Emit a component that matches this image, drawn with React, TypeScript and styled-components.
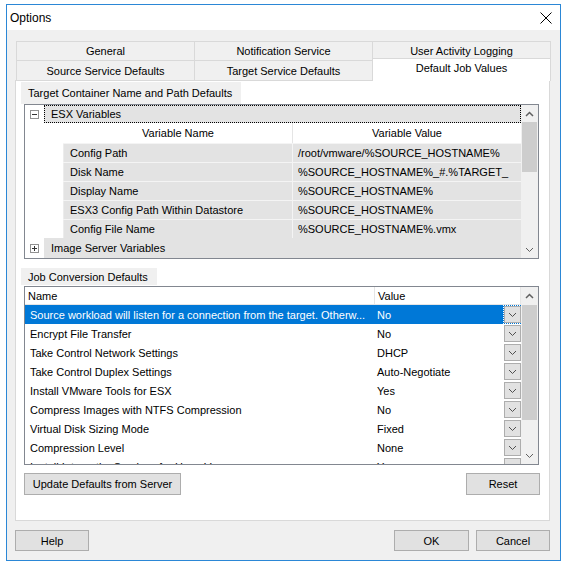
import React from 'react';
import styled, { createGlobalStyle, css } from 'styled-components';

const GlobalStyle = createGlobalStyle`
  html, body {
    margin: 0;
    padding: 0;
    background: #ffffff;
  }
  body {
    font-family: "Liberation Sans", Arial, sans-serif;
    font-size: 11px;
    color: #000000;
  }
`;

const Screen = styled.div`
  padding: 4px 0 0 6px;
`;

const Window = styled.div`
  width: 555px;
  height: 557px;
  box-sizing: border-box;
  border: 1px solid #2b87d6;
  background: #f0f0f0;
  display: flex;
  flex-direction: column;
`;

const TitleBar = styled.div`
  height: 25px;
  background: #ffffff;
  display: flex;
  align-items: center;
  justify-content: space-between;
  padding: 0 8px 0 3px;
  font-size: 12px;
`;

const Body = styled.div`
  flex: 1;
  padding: 11px 11px 0 8px;
  display: flex;
  flex-direction: column;
`;

const TabControl = styled.div`
  width: 535px;
  display: flex;
  flex-direction: column;
`;

const TabRow = styled.div<{ $h: number }>`
  display: flex;
  height: ${({ $h }) => $h}px;
  padding-left: 1px;
`;

const Tab = styled.div<{ $active?: boolean }>`
  width: 179px;
  box-sizing: border-box;
  margin-right: -1px;
  border: 1px solid #d9d9d9;
  border-bottom: none;
  display: flex;
  align-items: center;
  justify-content: center;
  background: #f0f0f0;
  ${({ $active }) =>
    $active &&
    css`
      position: relative;
      z-index: 1;
      background: #ffffff;
      height: 23px;
      margin-top: -2px;
      padding-bottom: 4px;
    `}
`;

const TabPage = styled.div`
  height: 441px;
  box-sizing: border-box;
  border: 1px solid #d9d9d9;
  background: #ffffff;
  padding: 1px 9px 0 5px;
  display: flex;
  flex-direction: column;
`;

const GroupLabel = styled.div<{ $h: number; $gapTop?: number; $gapBottom?: number }>`
  align-self: flex-start;
  height: ${({ $h }) => $h}px;
  margin-top: ${({ $gapTop }) => $gapTop ?? 0}px;
  margin-bottom: ${({ $gapBottom }) => $gapBottom ?? 0}px;
  display: flex;
  align-items: center;
  padding: 0 9px 0 7px;
  background: #f0f0f0;
`;

const Framed = styled.div<{ $h: number }>`
  margin-left: 3px;
  width: 515px;
  height: ${({ $h }) => $h}px;
  flex-shrink: 0;
  box-sizing: border-box;
  border: 1px solid #828790;
  display: flex;
  overflow: hidden;
`;

const Content = styled.div`
  flex: 1;
  display: flex;
  flex-direction: column;
  overflow: hidden;
`;

const NodeRow = styled.div<{ $h: number }>`
  height: ${({ $h }) => $h}px;
  flex-shrink: 0;
  display: flex;
  align-items: center;
`;

const Expander = styled.div`
  width: 19px;
  height: 100%;
  display: flex;
  align-items: center;
  padding-left: 5px;
  box-sizing: border-box;
`;

const NodeLabel = styled.div<{ $focused?: boolean }>`
  flex: 1;
  height: 100%;
  box-sizing: border-box;
  background: #e3e3e3;
  display: flex;
  align-items: center;
  padding-left: 6px;
  border: 1px dotted ${({ $focused }) => ($focused ? '#000000' : 'transparent')};
`;

const VarGrid = styled.div`
  margin-left: 38px;
  display: flex;
  flex-direction: column;
`;

const VarHeader = styled.div`
  height: 20px;
  display: flex;
  background: #ffffff;
`;

const VarHeadCell = styled.div<{ $divider?: boolean }>`
  width: 229px;
  display: flex;
  align-items: center;
  justify-content: center;
  box-sizing: border-box;
  border-left: 1px solid ${({ $divider }) => ($divider ? '#e5e5e5' : 'transparent')};
`;

const VarRow = styled.div`
  height: 19px;
  display: flex;
  background: #e3e3e3;
  box-sizing: border-box;
  border-top: 1px solid #f4f4f4;
`;

const VarCell = styled.div<{ $divider?: boolean }>`
  width: 229px;
  box-sizing: border-box;
  display: flex;
  align-items: center;
  padding-left: ${({ $divider }) => ($divider ? 5 : 6)}px;
  border-left: 1px solid ${({ $divider }) => ($divider ? '#f4f4f4' : '#ececec')};
  white-space: nowrap;
  overflow: hidden;
`;

const ScrollBar = styled.div`
  width: 17px;
  background: #f0f0f0;
  display: flex;
  flex-direction: column;
`;

const ScrollArrow = styled.div`
  height: 17px;
  display: flex;
  align-items: center;
  justify-content: center;
`;

const ScrollTrack = styled.div`
  flex: 1;
  display: flex;
  flex-direction: column;
`;

const ScrollThumb = styled.div<{ $top: number; $h: number }>`
  margin: ${({ $top }) => $top}px 1px 0 1px;
  height: ${({ $h }) => $h}px;
  background: #cdcdcd;
`;

const ListHeader = styled.div`
  height: 17px;
  flex-shrink: 0;
  display: flex;
  background: #ffffff;
  border-bottom: 1px solid #e5e5e5;
`;

const ListHeadCell = styled.div<{ $w?: number }>`
  ${({ $w }) => ($w ? `width: ${$w}px;` : 'flex: 1;')}
  box-sizing: border-box;
  display: flex;
  align-items: center;
  padding-left: 3px;
  border-right: 1px solid #e5e5e5;
`;

const ListRow = styled.div<{ $selected?: boolean }>`
  height: 19px;
  flex-shrink: 0;
  display: flex;
  align-items: center;
  background: ${({ $selected }) => ($selected ? '#0078d7' : '#ffffff')};
  color: ${({ $selected }) => ($selected ? '#ffffff' : '#000000')};
`;

const NameCell = styled.div`
  width: 350px;
  box-sizing: border-box;
  padding-left: 5px;
  white-space: nowrap;
  overflow: hidden;
`;

const ValueCell = styled.div`
  flex: 1;
  padding-left: 2px;
  white-space: nowrap;
`;

const DropButton = styled.div<{ $focused?: boolean }>`
  width: 17px;
  height: 17px;
  box-sizing: border-box;
  background: #e1e1e1;
  border: 1px solid #adadad;
  display: flex;
  align-items: center;
  justify-content: center;
  outline: ${({ $focused }) => ($focused ? '1px dotted #ffffff' : 'none')};
`;

const ActionRow = styled.div`
  margin: 8px 0 0 3px;
  width: 516px;
  display: flex;
  justify-content: space-between;
`;

const Button = styled.div<{ $w: number; $h?: number }>`
  width: ${({ $w }) => $w}px;
  height: ${({ $h }) => $h ?? 22}px;
  box-sizing: border-box;
  background: #e1e1e1;
  border: 1px solid #adadad;
  display: flex;
  align-items: center;
  justify-content: center;
  white-space: nowrap;
`;

const DialogButtons = styled.div`
  margin-top: 9px;
  width: 535px;
  display: flex;
  gap: 7px;
`;

const Spacer = styled.div`
  flex: 1;
`;

const Chevron = ({ up, color = '#606060' }: { up?: boolean; color?: string }) => (
  <svg width="9" height="6" viewBox="0 0 9 6">
    <polyline
      points={up ? '1,5 4.5,1.5 8,5' : '1,1 4.5,4.5 8,1'}
      fill="none"
      stroke={color}
      strokeWidth={up ? 1.5 : 1}
    />
  </svg>
);

const ExpandBox = ({ open }: { open?: boolean }) => (
  <svg width="9" height="9" viewBox="0 0 9 9">
    <rect x="0.5" y="0.5" width="8" height="8" fill="#ffffff" stroke="#919191" />
    <line x1="2" y1="4.5" x2="7" y2="4.5" stroke="#333333" />
    {!open && <line x1="4.5" y1="2" x2="4.5" y2="7" stroke="#333333" />}
  </svg>
);

const CloseIcon = () => (
  <svg width="12" height="12" viewBox="0 0 12 12">
    <line x1="0.5" y1="0.5" x2="11.5" y2="11.5" stroke="#000" strokeWidth="1" />
    <line x1="11.5" y1="0.5" x2="0.5" y2="11.5" stroke="#000" strokeWidth="1" />
  </svg>
);

const variables = [
  ['Config Path', '/root/vmware/%SOURCE_HOSTNAME%'],
  ['Disk Name', '%SOURCE_HOSTNAME%_#.%TARGET_'],
  ['Display Name', '%SOURCE_HOSTNAME%'],
  ['ESX3 Config Path Within Datastore', '%SOURCE_HOSTNAME%'],
  ['Config File Name', '%SOURCE_HOSTNAME%.vmx'],
];

const jobValues = [
  ['Source workload will listen for a connection from the target. Otherw...', 'No'],
  ['Encrypt File Transfer', 'No'],
  ['Take Control Network Settings', 'DHCP'],
  ['Take Control Duplex Settings', 'Auto-Negotiate'],
  ['Install VMware Tools for ESX', 'Yes'],
  ['Compress Images with NTFS Compression', 'No'],
  ['Virtual Disk Sizing Mode', 'Fixed'],
  ['Compression Level', 'None'],
  ['Install IntegrationServices for HyperV', 'Yes'],
];

export default function App() {
  return (
    <Screen>
      <GlobalStyle />
      <Window>
        <TitleBar>
          <span>Options</span>
          <CloseIcon />
        </TitleBar>
        <Body>
          <TabControl>
            <TabRow $h={19}>
              <Tab>General</Tab>
              <Tab>Notification Service</Tab>
              <Tab>User Activity Logging</Tab>
            </TabRow>
            <TabRow $h={20}>
              <Tab>Source Service Defaults</Tab>
              <Tab>Target Service Defaults</Tab>
              <Tab $active>Default Job Values</Tab>
            </TabRow>
            <TabPage>
              <GroupLabel $h={22}>Target Container Name and Path Defaults</GroupLabel>
              <Framed $h={155}>
                <Content>
                  <NodeRow $h={18}>
                    <Expander>
                      <ExpandBox open />
                    </Expander>
                    <NodeLabel $focused>ESX Variables</NodeLabel>
                  </NodeRow>
                  <VarGrid>
                    <VarHeader>
                      <VarHeadCell>Variable Name</VarHeadCell>
                      <VarHeadCell $divider>Variable Value</VarHeadCell>
                    </VarHeader>
                    {variables.map(([name, value]) => (
                      <VarRow key={name}>
                        <VarCell>{name}</VarCell>
                        <VarCell $divider>{value}</VarCell>
                      </VarRow>
                    ))}
                  </VarGrid>
                  <NodeRow $h={20}>
                    <Expander>
                      <ExpandBox />
                    </Expander>
                    <NodeLabel>Image Server Variables</NodeLabel>
                  </NodeRow>
                </Content>
                <ScrollBar>
                  <ScrollArrow>
                    <Chevron up />
                  </ScrollArrow>
                  <ScrollTrack>
                    <ScrollThumb $top={0} $h={50} />
                  </ScrollTrack>
                  <ScrollArrow>
                    <Chevron />
                  </ScrollArrow>
                </ScrollBar>
              </Framed>
              <GroupLabel $h={17} $gapTop={9} $gapBottom={1}>
                Job Conversion Defaults
              </GroupLabel>
              <Framed $h={179}>
                <Content>
                  <ListHeader>
                    <ListHeadCell $w={350}>Name</ListHeadCell>
                    <ListHeadCell>Value</ListHeadCell>
                  </ListHeader>
                  {jobValues.map(([name, value], i) => (
                    <ListRow key={name} $selected={i === 0}>
                      <NameCell>{name}</NameCell>
                      <ValueCell>{value}</ValueCell>
                      <DropButton $focused={i === 0}>
                        <Chevron color="#505050" />
                      </DropButton>
                    </ListRow>
                  ))}
                </Content>
                <ScrollBar>
                  <ScrollArrow>
                    <Chevron up />
                  </ScrollArrow>
                  <ScrollTrack>
                    <ScrollThumb $top={1} $h={115} />
                  </ScrollTrack>
                  <ScrollArrow>
                    <Chevron />
                  </ScrollArrow>
                </ScrollBar>
              </Framed>
              <ActionRow>
                <Button $w={157}>Update Defaults from Server</Button>
                <Button $w={74}>Reset</Button>
              </ActionRow>
            </TabPage>
          </TabControl>
          <DialogButtons>
            <Button $w={74} $h={21}>Help</Button>
            <Spacer />
            <Button $w={75} $h={21}>OK</Button>
            <Button $w={74} $h={21}>Cancel</Button>
          </DialogButtons>
        </Body>
      </Window>
    </Screen>
  );
}
